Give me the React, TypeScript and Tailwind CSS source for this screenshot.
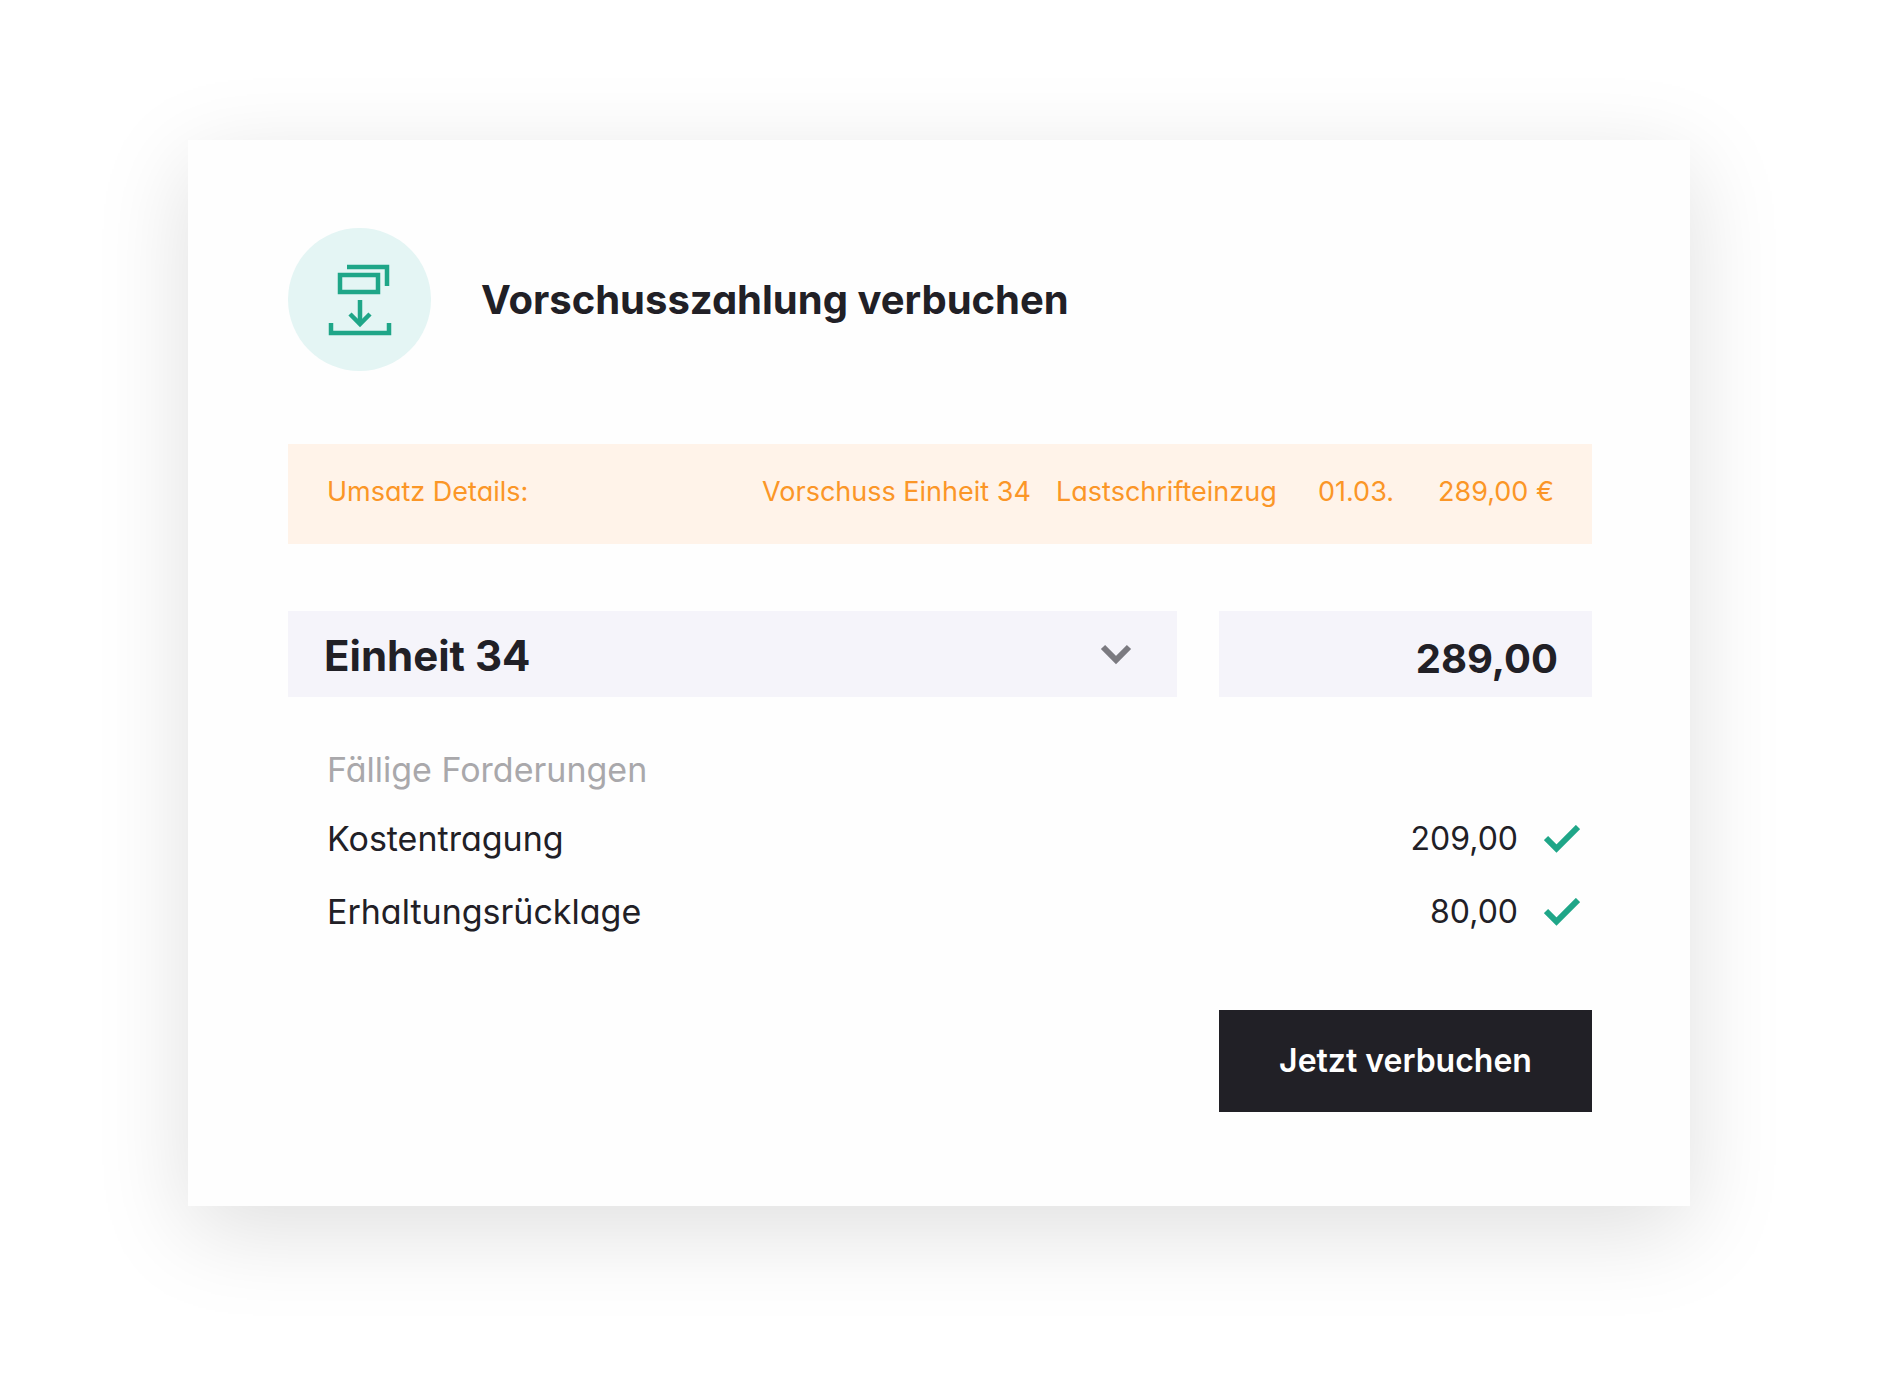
import { useState } from "react";

const details = [
  { text: "Vorschuss Einheit 34", className: "w-[294px]" },
  { text: "Lastschrifteinzug", className: "w-[262px]" },
  { text: "01.03.", className: "w-[120px]" },
  { text: "289,00 €", className: "" }
];

const claims = [
  { name: "Kostentragung", amount: "209,00" },
  { name: "Erhaltungsrücklage", amount: "80,00" }
];

function BookingIcon() {
  return (
    <svg
      className="w-[64px] h-[72px]"
      viewBox="0 0 64 72"
      fill="none"
      stroke="currentColor"
      strokeWidth="4.500"
      aria-hidden="true"
    >
      <path d="M19 3h40v19" />
      <path d="M12 11h38v17H12z" />
      <path d="M32 36v24" />
      <path d="M22 50l10 10l10 -10" />
      <path d="M3 59v10h58v-10" />
    </svg>
  );
}

function CheckIcon() {
  return (
    <svg
      className="w-[36px] h-[28px]"
      viewBox="0 0 36 28"
      fill="none"
      stroke="currentColor"
      strokeWidth="6"
      role="img"
      aria-label="Ausgeglichen"
    >
      <path d="M2 13l10.500 10.500L34 2" />
    </svg>
  );
}

function ChevronIcon() {
  return (
    <svg
      className="absolute right-[45px] top-[33px] w-[32px] h-[21px] text-[#7b7a80] pointer-events-none"
      viewBox="0 0 32 21"
      fill="none"
      stroke="currentColor"
      strokeWidth="6"
      aria-hidden="true"
    >
      <path d="M3 3l13 13L29 3" />
    </svg>
  );
}

export default function App() {
  const [unit, setUnit] = useState("34");
  const [amount, setAmount] = useState("289,00");

  return (
    <main className="min-h-screen bg-white pt-[140px] pb-[190px] pl-[188px] pr-[190px] font-['Inter',sans-serif] [font-feature-settings:'cv11'] text-[#212026]">
      <form
        className="bg-[#fefefe] pt-[88px] pb-[94px] pl-[100px] pr-[98px] shadow-[0_24px_88px_rgba(0,0,0,0.13)]"
        onSubmit={(e) => e.preventDefault()}
      >
        <header className="flex items-center gap-[50px]">
          <div className="flex items-center justify-center w-[143px] h-[143px] rounded-full bg-[#e4f5f4] text-[#1fa688]">
            <BookingIcon />
          </div>
          <h1 className="text-[40px] leading-[52px] font-bold">
            Vorschusszahlung verbuchen
          </h1>
        </header>

        <div className="mt-[73px] h-[100px] pl-[39px] pr-[38px] pb-[4px] flex items-center justify-between bg-[#fff3e9] text-[27px] leading-[36px] text-[#fb9627] whitespace-nowrap">
          <span>Umsatz Details:</span>
          <div className="flex">
            {details.map((detail) => (
              <span key={detail.text} className={detail.className}>
                {detail.text}
              </span>
            ))}
          </div>
        </div>

        <div className="mt-[67px] flex gap-[42px]">
          <div className="relative flex-1">
            <select
              aria-label="Einheit"
              className="appearance-none w-full h-[86px] pt-[4px] pl-[36px] bg-[#f5f4fa] text-[42px] leading-[52px] font-bold"
              value={unit}
              onChange={(e) => setUnit(e.target.value)}
            >
              <option value="34">Einheit 34</option>
            </select>
            <ChevronIcon />
          </div>
          <input
            aria-label="Betrag"
            className="w-[373px] h-[86px] pt-[8px] pr-[34px] bg-[#f5f4fa] text-[40px] leading-[52px] font-bold text-right"
            value={amount}
            onChange={(e) => setAmount(e.target.value)}
          />
        </div>

        <table className="mt-[40px] w-full text-[34px] leading-[40px]">
          <thead>
            <tr className="h-[65px]">
              <th colSpan={3} className="pl-[39px] text-left font-normal text-[#a9a8ab]">
                Fällige Forderungen
              </th>
            </tr>
          </thead>
          <tbody>
            {claims.map((claim) => (
              <tr key={claim.name} className="h-[73px]">
                <td className="pl-[39px]">{claim.name}</td>
                <td className="text-right text-[32px]">{claim.amount}</td>
                <td className="w-[74px] pl-[26px] text-[#1fa688]">
                  <CheckIcon />
                </td>
              </tr>
            ))}
          </tbody>
        </table>

        <div className="mt-[62px] flex justify-end">
          <button
            type="submit"
            className="w-[373px] h-[102px] bg-[#212026] text-[32px] leading-[40px] font-semibold text-white"
          >
            Jetzt verbuchen
          </button>
        </div>
      </form>
    </main>
  );
}
